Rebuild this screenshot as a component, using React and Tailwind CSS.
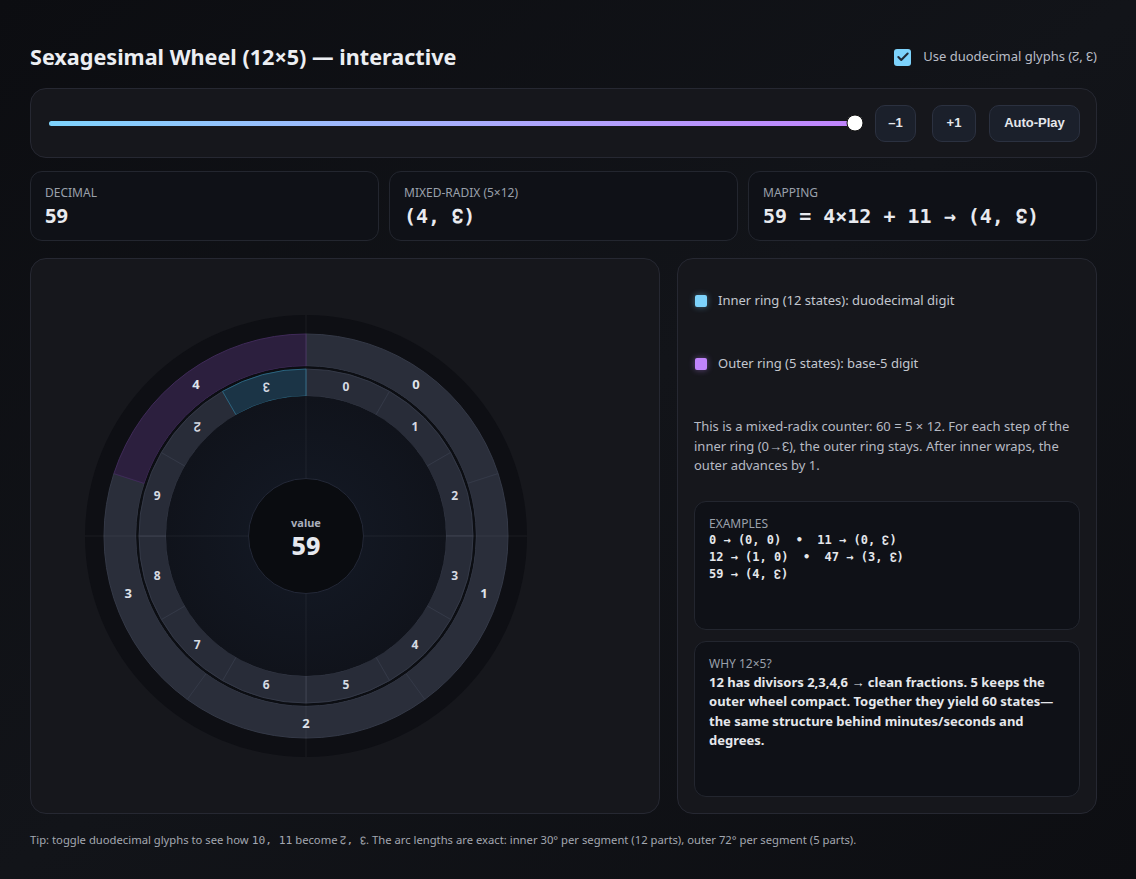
import React, { useState } from 'react';
import { Check } from 'lucide-react';

const SANS = { fontFamily: '"Noto Sans", "Open Sans", sans-serif' };
const MONO = { fontFamily: '"DejaVu Sans Mono", "Liberation Mono", monospace' };

const CX = 260;
const CY = 260;

const pt = (r, deg) => {
    const a = (deg * Math.PI) / 180;
    return [CX + r * Math.sin(a), CY - r * Math.cos(a)];
};

// annular sector, angles clockwise from 12 o'clock
const sector = (r0, r1, a0, a1) => {
    const [x1, y1] = pt(r1, a0);
    const [x2, y2] = pt(r1, a1);
    const [x3, y3] = pt(r0, a1);
    const [x4, y4] = pt(r0, a0);
    const large = a1 - a0 > 180 ? 1 : 0;
    return `M${x1} ${y1} A${r1} ${r1} 0 ${large} 1 ${x2} ${y2} L${x3} ${y3} A${r0} ${r0} 0 ${large} 0 ${x4} ${y4} Z`;
};

const Wheel = ({ value, glyph }) => {
    const inner = value % 12;
    const outer = Math.floor(value / 12);

    return (
        <svg width="520" height="520" viewBox="0 0 520 520">
            <defs>
                <radialGradient id="core" cx="50%" cy="50%" r="50%">
                    <stop offset="0%" stopColor="#141a26" />
                    <stop offset="100%" stopColor="#10131b" />
                </radialGradient>
            </defs>
            <circle cx={CX} cy={CY} r="221" fill="#0e0f14" />

            {/* outer ring, 5 x 72deg */}
            {[0, 1, 2, 3, 4].map(i => (
                <path
                    key={'o' + i}
                    d={sector(170, 202, i * 72, (i + 1) * 72)}
                    fill={i === outer ? '#2c1f3e' : '#2a2e3a'}
                    stroke={i === outer ? '#3f2a58' : '#343947'}
                    strokeWidth="1"
                />
            ))}
            <circle cx={CX} cy={CY} r="168.5" fill="none" stroke="#0c0e13" strokeWidth="2.5" />

            {/* inner ring, 12 x 30deg */}
            {Array.from({ length: 12 }).map((_, i) => (
                <path
                    key={'i' + i}
                    d={sector(140, 167, i * 30, (i + 1) * 30)}
                    fill={i === inner ? '#1b3446' : '#282c38'}
                    stroke={i === inner ? '#2b6580' : '#343947'}
                    strokeWidth="1"
                />
            ))}
            <circle cx={CX} cy={CY} r="140" fill="url(#core)" />

            <line x1="39" y1={CY} x2="481" y2={CY} stroke="#ffffff" strokeOpacity="0.06" />
            <line x1={CX} y1="39" x2={CX} y2="481" stroke="#ffffff" strokeOpacity="0.06" />

            <circle cx={CX} cy={CY} r="57.5" fill="#0a0c10" stroke="#232837" strokeWidth="1" />

            {[0, 1, 2, 3, 4].map(i => {
                const [x, y] = pt(187, i * 72 + 36);
                return (
                    <text key={'ol' + i} x={x} y={y} dy="4.5" textAnchor="middle" fill="#dfe3ea" fontSize="13" fontWeight="700" style={SANS}>
                        {i}
                    </text>
                );
            })}
            {Array.from({ length: 12 }).map((_, i) => {
                const [x, y] = pt(154, i * 30 + 15);
                return (
                    <text key={'il' + i} x={x} y={y} dy="4" textAnchor="middle" fill="#d6dae2" fontSize="12" fontWeight="700" style={SANS}>
                        {glyph(i)}
                    </text>
                );
            })}

            <text x={CX} y="251" textAnchor="middle" fill="#a9afbb" fontSize="11" fontWeight="700" style={SANS}>value</text>
            <text x={CX} y="279" textAnchor="middle" fill="#e6e8ee" fontSize="25" fontWeight="800" style={SANS}>{value}</text>
        </svg>
    );
};

const StatCard = ({ label, children }) => (
    <div className="h-[70px] rounded-[12px] border border-[#23262f] bg-[#0f1117] px-[14px] pt-[13px]">
        <div className="text-[12px] leading-[16px] text-[#9aa0ab]">{label}</div>
        <div className="mt-[3px] text-[20px] font-bold leading-[24px] text-[#e8eaef]" style={MONO}>{children}</div>
    </div>
);

export default function App() {
    const [value, setValue] = useState(59);
    const [useGlyphs, setUseGlyphs] = useState(true);

    const glyph = d => {
        if (!useGlyphs) return String(d);
        if (d === 10) return '↊';
        if (d === 11) return '↋';
        return String(d);
    };

    const inner = value % 12;
    const outer = Math.floor(value / 12);
    const pct = (value / 59) * 100;

    return (
        <div className="min-h-[879px] bg-gradient-to-br from-[#0c0d11] via-[#121419] to-[#0d0e12] pb-[20px]" style={SANS}>
            <div className="ml-[30px] w-[1067px] pt-[40px]">
                {/* Header */}
                <div className="flex h-[34px] items-center justify-between">
                    <h1 className="text-[21.6px] font-bold text-[#eceef2]">Sexagesimal Wheel (12×5) — interactive</h1>
                    <label className="flex items-center gap-[12px] text-[13px] text-[#b9bdc6]">
                        <button
                            onClick={() => setUseGlyphs(!useGlyphs)}
                            className={`flex h-[17px] w-[17px] items-center justify-center rounded-[3px] ${useGlyphs ? 'bg-[#7dd3fc]' : 'border border-[#555] bg-transparent'}`}
                        >
                            {useGlyphs && <Check size={14} strokeWidth={3.5} className="text-[#1f2937]" />}
                        </button>
                        Use duodecimal glyphs (↊, ↋)
                    </label>
                </div>

                {/* Slider */}
                <div className="mt-[14px] flex h-[70px] items-center rounded-[16px] border border-[#262832] bg-[#16171c] pl-[18px] pr-[16px]">
                    <div className="relative h-[5px] flex-1 rounded-full bg-[#2a2d38]">
                        <div className="h-full rounded-full bg-gradient-to-r from-[#7dd3fc] to-[#c084fc]" style={{ width: `${pct}%` }} />
                        <div
                            className="absolute top-1/2 h-[17px] w-[17px] -translate-x-1/2 -translate-y-1/2 rounded-full border border-[#111] bg-white"
                            style={{ left: `${pct}%` }}
                        />
                    </div>
                    <div className="ml-[20px] flex" style={{ fontFamily: '"Liberation Sans", Arial, sans-serif' }}>
                        <button onClick={() => setValue((value + 59) % 60)} className="h-[37px] w-[41px] rounded-[10px] border border-[#2b3140] bg-[#1b202b] text-[13px] font-bold text-[#e5e7eb]">–1</button>
                        <button onClick={() => setValue((value + 1) % 60)} className="ml-[16px] h-[37px] w-[44px] rounded-[10px] border border-[#2b3140] bg-[#1b202b] text-[13px] font-bold text-[#e5e7eb]">+1</button>
                        <button className="ml-[13px] h-[37px] w-[91px] rounded-[10px] border border-[#2b3140] bg-[#1b202b] text-[13px] font-bold text-[#e5e7eb]">Auto-Play</button>
                    </div>
                </div>

                {/* Stats */}
                <div className="mt-[13px] grid grid-cols-3 gap-[10px]">
                    <StatCard label="DECIMAL"><span style={SANS}>{value}</span></StatCard>
                    <StatCard label="MIXED-RADIX (5×12)">({outer}, {glyph(inner)})</StatCard>
                    <StatCard label="MAPPING">{value} = {outer}×12 + {inner} → ({outer}, {glyph(inner)})</StatCard>
                </div>

                {/* Main */}
                <div className="mt-[17px] grid grid-cols-[630px_1fr] gap-[17px]">
                    <div className="flex h-[556px] items-center rounded-[16px] border border-[#262832] bg-[#16171c] px-[15px]">
                        <Wheel value={value} glyph={glyph} />
                    </div>

                    <div className="flex flex-col rounded-[16px] border border-[#262832] bg-[#16171c] px-[16px] pt-[32px]">
                        <div className="flex h-[20px] items-center gap-[11px] text-[13px] text-[#c3c7cf]">
                            <span className="ml-px h-[12px] w-[12px] rounded-[2px] bg-[#7dd3fc] shadow-[0_0_6px_rgba(125,211,252,0.45)]" />
                            Inner ring (12 states): duodecimal digit
                        </div>
                        <div className="mt-[43px] flex h-[20px] items-center gap-[11px] text-[13px] text-[#c3c7cf]">
                            <span className="ml-px h-[12px] w-[12px] rounded-[2px] bg-[#c084fc] shadow-[0_0_6px_rgba(192,132,252,0.45)]" />
                            Outer ring (5 states): base-5 digit
                        </div>
                        <p className="mt-[43px] text-[13px] leading-[19.5px] text-[#b6bac3]">
                            This is a mixed-radix counter: 60 = 5 × 12. For each step of the inner ring (0→↋), the outer ring stays. After inner wraps, the outer advances by 1.
                        </p>

                        <div className="mt-[25px] h-[129px] rounded-[12px] border border-[#23262f] bg-[#0f1117] px-[14px] pt-[14px]">
                            <div className="text-[12px] leading-[16px] text-[#9aa0ab]">EXAMPLES</div>
                            <div className="whitespace-pre text-[12px] font-bold leading-[17px] text-[#e5e7eb]" style={MONO}>
                                {`0 → (0, 0)  •  11 → (0, ${glyph(11)})\n12 → (1, 0)  •  47 → (3, ${glyph(11)})\n59 → (4, ${glyph(11)})`}
                            </div>
                        </div>

                        <div className="mt-[11px] h-[156px] rounded-[12px] border border-[#23262f] bg-[#0f1117] px-[14px] pt-[14px]">
                            <div className="text-[12px] leading-[16px] text-[#9aa0ab]">WHY 12×5?</div>
                            <p className="mt-[1px] pr-[6px] text-[13px] font-bold leading-[19.5px] text-[#e5e7eb]">
                                12 has divisors 2,3,4,6 → clean fractions. 5 keeps the outer wheel compact. Together they yield 60 states—the same structure behind minutes/seconds and degrees.
                            </p>
                        </div>
                    </div>
                </div>

                <p className="mt-[18px] text-[11.25px] text-[#a3a7b0]">
                    Tip: toggle duodecimal glyphs to see how <code style={MONO}>10, 11</code> become <code style={MONO}>↊, ↋</code>. The arc lengths are exact: inner 30° per segment (12 parts), outer 72° per segment (5 parts).
                </p>
            </div>
        </div>
    );
}
